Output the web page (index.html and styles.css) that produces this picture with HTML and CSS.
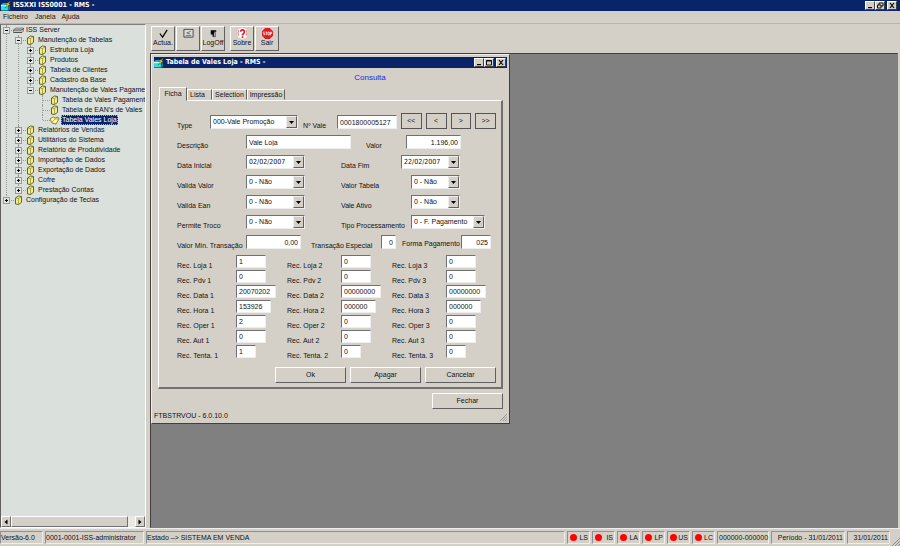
FILE: index.html
```html
<!DOCTYPE html>
<html lang="pt">
<head>
<meta charset="utf-8">
<title>ISSXXI ISS0001 - RMS -</title>
<link rel="stylesheet" href="styles.css">
</head>
<body>
<svg class="defs" aria-hidden="true">
  <symbol id="app" viewBox="0 0 10 10"><path d="M0 3.500l2-1.500h6l-1 2v6H0z" fill="#16b5c5"/><path d="M0 10h7l2-1.500V4.500L7 5.500V9H0" fill="#0b7f91"/><path d="M0 4h6.500v1.500H0z" fill="#d8ffff"/><path d="M0 5.500h6.500V9H0z" fill="#29e1e5"/><path d="M9.500 0L4.500 3.500h2L4 7l5.500-4H7.500z" fill="#ffe928" stroke="#443d00" stroke-width=".4"/></symbol>
  <symbol id="book" viewBox="0 0 8 10"><path d="M1 3l3-2 3 .5v5.800L4 9.500 1 9z" fill="#f5ee83" stroke="#55531c" stroke-width=".9"/><path d="M1 3l3 .5L7 1.500M4 3.500v6" fill="none" stroke="#77732a" stroke-width=".6"/></symbol>
  <symbol id="open" viewBox="0 0 11 10"><path d="M1 4l3-2 2 1 3-1 1 2-3 5-4-1z" fill="#fff79a" stroke="#6d6725" stroke-width=".8"/><path d="M3 7l3-3 4 0" fill="none" stroke="#8d872f" stroke-width=".7"/></symbol>
  <symbol id="server" viewBox="0 0 11 8"><path d="M.5 4l2-2h8v3L9 6.500H.5z" fill="#c4c4c4" stroke="#666" stroke-width=".7"/><path d="M.5 4H9l1.500-2M.5 6.500H9" fill="none" stroke="#444" stroke-width=".8"/></symbol>
  <symbol id="down" viewBox="0 0 5 3"><path d="M0 0h5L2.500 3z"/></symbol>
  <symbol id="min" viewBox="0 0 8 7"><path d="M2 5h4v1.200H2z"/></symbol>
  <symbol id="max" viewBox="0 0 8 7"><path d="M1.500 1.500h5v4.500h-5zM1.500 2h5" fill="none" stroke="#000" stroke-width=".9"/></symbol>
  <symbol id="rest" viewBox="0 0 8 7"><path d="M3 1h4v3H5M3 1v2M1.500 3h3.500v3H1.500z" fill="none" stroke="#000" stroke-width=".9"/></symbol>
  <symbol id="x" viewBox="0 0 8 7"><path d="M2 1l4 5M6 1L2 6" stroke="#000" stroke-width="1.200"/></symbol>
  <symbol id="grip" viewBox="0 0 8 8"><path d="M0 8l8-8M3 8l5-5M6 8l2-2" stroke="#858585" stroke-width=".9"/></symbol>
</svg>
<div class="app">
  <header class="titlebar main-title">
    <svg class="app-icon"><use href="#app"/></svg><h1>ISSXXI ISS0001 - RMS -</h1>
    <div class="winbtns"><button aria-label="Minimizar"><svg><use href="#min"/></svg></button><button aria-label="Restaurar"><svg><use href="#rest"/></svg></button><button class="close" aria-label="Fechar"><svg><use href="#x"/></svg></button></div>
  </header>
  <nav class="menu"><button>Ficheiro</button><button>Janela</button><button>Ajuda</button></nav>
  <div class="body">
    <aside class="side">
      <ul class="tree">
        <li><div class="row"><i class="exp"></i><svg><use href="#server"/></svg><span>ISS Server</span></div>
          <ul>
            <li><div class="row"><i class="exp"></i><svg><use href="#book"/></svg><span>Manutenção de Tabelas</span></div>
              <ul>
                <li><div class="row"><i class="exp plus"></i><svg><use href="#book"/></svg><span>Estrutura Loja</span></div></li>
                <li><div class="row"><i class="exp plus"></i><svg><use href="#book"/></svg><span>Produtos</span></div></li>
                <li><div class="row"><i class="exp plus"></i><svg><use href="#book"/></svg><span>Tabela de Clientes</span></div></li>
                <li><div class="row"><i class="exp plus"></i><svg><use href="#book"/></svg><span>Cadastro da Base</span></div></li>
                <li><div class="row"><i class="exp"></i><svg><use href="#book"/></svg><span>Manutenção de Vales Pagamento</span></div>
                  <ul>
                    <li><div class="row"><i class="leaf"></i><svg><use href="#book"/></svg><span>Tabela de Vales Pagamento</span></div></li>
                    <li><div class="row"><i class="leaf"></i><svg><use href="#book"/></svg><span>Tabela de EAN's de Vales</span></div></li>
                    <li><div class="row"><i class="leaf"></i><svg><use href="#open"/></svg><span class="selected">Tabela Vales Loja</span></div></li>
                  </ul>
                </li>
              </ul>
            </li>
            <li><div class="row"><i class="exp plus"></i><svg><use href="#book"/></svg><span>Relatórios de Vendas</span></div></li>
            <li><div class="row"><i class="exp plus"></i><svg><use href="#book"/></svg><span>Utilitários do Sistema</span></div></li>
            <li><div class="row"><i class="exp plus"></i><svg><use href="#book"/></svg><span>Relatório de Produtividade</span></div></li>
            <li><div class="row"><i class="exp plus"></i><svg><use href="#book"/></svg><span>Importação de Dados</span></div></li>
            <li><div class="row"><i class="exp plus"></i><svg><use href="#book"/></svg><span>Exportação de Dados</span></div></li>
            <li><div class="row"><i class="exp plus"></i><svg><use href="#book"/></svg><span>Cofre</span></div></li>
            <li><div class="row"><i class="exp plus"></i><svg><use href="#book"/></svg><span>Prestação Contas</span></div></li>
          </ul>
        </li>
        <li><div class="row"><i class="exp plus"></i><svg><use href="#book"/></svg><span>Configuração de Teclas</span></div></li>
      </ul>
      <div class="scroll"><button aria-label="Esquerda"><svg viewBox="0 0 8 8"><path d="M5.500 1.500v5L2.500 4z"/></svg></button><i class="thumb"></i><button aria-label="Direita"><svg viewBox="0 0 8 8"><path d="M2.500 1.500v5L5.500 4z"/></svg></button></div>
    </aside>
    <main>
      <div class="toolbar">
        <button><svg viewBox="0 0 12 12"><path d="M2 6l3 4 5-8" fill="none" stroke="#000" stroke-width="1.300"/></svg><span>Actua.</span></button>
        <button aria-label="Ecrã"><svg viewBox="0 0 12 12"><path d="M1 1.500h10v8.500H1z" fill="#ddd" stroke="#333" stroke-width=".9"/><path d="M8.500 3.500L4 5.500l4 1M3 8.200h6" fill="none" stroke="#555" stroke-width=".8"/></svg></button>
        <button><svg viewBox="0 0 12 12"><path d="M3 2.500h6V4H6.500v5.500H5V7H3z"/><path d="M6.500 5H8v4.500H6.500z" fill="#fff" stroke="#222" stroke-width=".7"/></svg><span>LogOff</span></button>
        <i class="space"></i>
        <button><svg viewBox="0 0 12 12"><path d="M2 1l4-1 4 1 2 4-1.500 5L6 12l-4.500-2L0 5z" fill="#fff"/><path d="M4 4q0-2 2-2t2 2-2 3v1M6 9v2" fill="none" stroke="#e91522" stroke-width="1.800"/><path d="M2 2.500L1 5.500l1 3M10 2.500l1 3-1 3" fill="none" stroke="#c44" stroke-width=".8"/></svg><span>Sobre</span></button>
        <button><svg viewBox="0 0 12 12"><path d="M3.500 0h5L12 3.500v5L8.500 12h-5L0 8.500v-5z" fill="#e51820"/><path d="M3 4.500H1.500V6H3v1.500H1.500M3.800 4.500h2M4.800 4.500v3.300M6.500 4.500H8v3H6.500zM9.300 8V4.500h1.200V6H9.300" fill="none" stroke="#fff" stroke-width=".8"/></svg><span>Sair</span></button>
      </div>
      <div class="desktop">
        <section class="window">
          <header class="titlebar">
            <svg class="app-icon"><use href="#app"/></svg><h2>Tabela de Vales Loja - RMS -</h2>
            <div class="winbtns"><button aria-label="Minimizar"><svg><use href="#min"/></svg></button><button aria-label="Maximizar"><svg><use href="#max"/></svg></button><button class="close" aria-label="Fechar"><svg><use href="#x"/></svg></button></div>
          </header>
          <p class="mode">Consulta</p>
          <div class="tabs"><button class="active">Ficha</button><button class="narrow">Lista</button><button class="wide">Selection</button><button class="wide">Impressão</button></div>
          <form class="panel">
            <div class="line type">
              <label for="type">Type</label><div class="combo"><select id="type"><option>000-Vale Promoção</option></select><i><svg><use href="#down"/></svg></i></div>
              <label for="num">Nº Vale</label><input id="num" value="0001800005127">
              <div class="nav"><button type="button">&lt;&lt;</button><button type="button">&lt;</button><button type="button">&gt;</button><button type="button">&gt;&gt;</button></div>
            </div>
            <div class="line desc"><label for="desc">Descrição</label><input id="desc" value="Vale Loja"><label for="valor">Valor</label><input class="num" id="valor" value="1.196,00"></div>
            <div class="line dates"><label for="di">Data Inicial</label><div class="combo date"><select id="di"><option>02/02/2007</option></select><i><svg><use href="#down"/></svg></i></div><label for="df">Data Fim</label><div class="combo date"><select id="df"><option>22/02/2007</option></select><i><svg><use href="#down"/></svg></i></div></div>
            <div class="line flags"><label for="vv">Valida Valor</label><div class="combo"><select id="vv"><option>0 - Não</option></select><i><svg><use href="#down"/></svg></i></div><label for="vt">Valor Tabela</label><div class="combo"><select id="vt"><option>0 - Não</option></select><i><svg><use href="#down"/></svg></i></div></div>
            <div class="line flags"><label for="ve">Valida Ean</label><div class="combo"><select id="ve"><option>0 - Não</option></select><i><svg><use href="#down"/></svg></i></div><label for="va">Vale Ativo</label><div class="combo"><select id="va"><option>0 - Não</option></select><i><svg><use href="#down"/></svg></i></div></div>
            <div class="line flags long"><label for="pt">Permite Troco</label><div class="combo"><select id="pt"><option>0 - Não</option></select><i><svg><use href="#down"/></svg></i></div><label for="tp">Tipo Processamento</label><div class="combo"><select id="tp"><option>0 - F. Pagamento</option></select><i><svg><use href="#down"/></svg></i></div></div>
            <div class="line mins"><label for="vm">Valor Min. Transação</label><input class="num" id="vm" value="0,00"><label for="te">Transação Especial</label><input class="num" id="te" value="0"><label for="fp">Forma Pagamento</label><input class="num" id="fp" value="025"></div>
            <div class="line rec"><label for="l1">Rec. Loja 1</label><input id="l1" value="1"><label for="l2">Rec. Loja 2</label><input id="l2" value="0"><label for="l3">Rec. Loja 3</label><input id="l3" value="0"></div>
            <div class="line rec"><label for="p1">Rec. Pdv 1</label><input id="p1" value="0"><label for="p2">Rec. Pdv 2</label><input id="p2" value="0"><label for="p3">Rec. Pdv 3</label><input id="p3" value="0"></div>
            <div class="line rec w40"><label for="d1">Rec. Data 1</label><input id="d1" value="20070202"><label for="d2">Rec. Data 2</label><input id="d2" value="00000000"><label for="d3">Rec. Data 3</label><input id="d3" value="00000000"></div>
            <div class="line rec w35"><label for="h1">Rec. Hora 1</label><input id="h1" value="153926"><label for="h2">Rec. Hora 2</label><input id="h2" value="000000"><label for="h3">Rec. Hora 3</label><input id="h3" value="000000"></div>
            <div class="line rec"><label for="o1">Rec. Oper 1</label><input id="o1" value="2"><label for="o2">Rec. Oper 2</label><input id="o2" value="0"><label for="o3">Rec. Oper 3</label><input id="o3" value="0"></div>
            <div class="line rec"><label for="a1">Rec. Aut 1</label><input id="a1" value="0"><label for="a2">Rec. Aut 2</label><input id="a2" value="0"><label for="a3">Rec. Aut 3</label><input id="a3" value="0"></div>
            <div class="line rec w20"><label for="t1">Rec. Tenta. 1</label><input id="t1" value="1"><label for="t2">Rec. Tenta. 2</label><input id="t2" value="0"><label for="t3">Rec. Tenta. 3</label><input id="t3" value="0"></div>
            <div class="actions"><button type="button">Ok</button><button type="button">Apagar</button><button type="button">Cancelar</button></div>
          </form>
          <div class="actions foot"><button>Fechar</button></div>
          <footer><span>FTBSTRVOU - 6.0.10.0</span><svg><use href="#grip"/></svg></footer>
        </section>
      </div>
    </main>
  </div>
  <footer class="status">
    <span class="ver">Versão-6.0</span><span class="user">0001-0001-ISS-administrator</span><span class="state">Estado –&gt; SISTEMA EM VENDA</span>
    <span class="led">LS</span><span class="led">IS</span><span class="led">LA</span><span class="led">LP</span><span class="led">US</span><span class="led">LC</span>
    <span class="code">000000-000000</span><span class="period">Período - 31/01/2011</span><span class="today">31/01/2011</span><svg><use href="#grip"/></svg>
  </footer>
</div>
</body>
</html>
```
FILE: styles.css
```css
* { box-sizing: border-box; }
body { margin: 0; background: #d4d0c8; color: #111; font: 7px/10px "Liberation Sans", Arial, sans-serif; }
button, input, select { margin: 0; padding: 0; border: 0; border-radius: 0; background: #d4d0c8; color: inherit; font: inherit; }
h1, h2, p, ul { margin: 0; padding: 0; }
svg { display: block; flex: none; }
.defs { position: absolute; width: 0; height: 0; }
.app { display: flex; flex-direction: column; height: 100vh; }

.titlebar { display: flex; align-items: center; gap: 2px; height: 11px; background: #0a246a; color: #fff; }
.titlebar h1, .titlebar h2 { flex: 1; font: bold 7px/11px "DejaVu Sans Condensed", "DejaVu Sans", sans-serif; white-space: nowrap; }
.app-icon { width: 10px; height: 10px; }
.main-title { padding: 0 2px 0 1px; }
.winbtns { display: flex; padding-right: 1px; }
.winbtns button { width: 10px; height: 9px; border: 1px solid; border-color: #fff #404040 #404040 #fff; }
.winbtns svg { width: 8px; height: 7px; }
.winbtns .close { margin-left: 2px; }
.menu { display: flex; gap: 7px; height: 13px; padding-left: 3px; border-bottom: 1px solid #b5b5b5; }
.menu button:last-child { margin-left: -1px; }

.body { flex: 1; display: flex; gap: 4px; min-height: 0; }
.side { flex: none; display: flex; flex-direction: column; width: 146px; border: 1px solid; border-color: #808080 #fff #fff #606060; background: #dae0dc; overflow: hidden; }
.tree { flex: 1; padding-left: 2px; overflow: hidden; list-style: none; }
.tree ul { padding-left: 12px; list-style: none; }
.tree li { position: relative; }
.tree li::before { content: ""; position: absolute; left: 3px; top: 0; bottom: 0; border-left: 1px dotted #999; }
.tree li:last-child::before { bottom: auto; height: 5px; }
.row { position: relative; display: flex; align-items: center; height: 10px; white-space: nowrap; }
.row::before { content: ""; position: absolute; left: 4px; top: 5px; width: 7px; border-top: 1px dotted #999; }
.row svg { position: relative; width: 11px; height: 10px; margin: 0 1px 0 3px; }
.row span { padding: 0 1px; }
.row .selected { background: #0a246a; color: #fff; outline: 1px dotted #c5b36a; outline-offset: -1px; }
.exp, .leaf { flex: none; width: 7px; height: 7px; }
.exp { position: relative; border: 1px solid #999; background: #e4e8e5; }
.exp::before { content: ""; position: absolute; left: 1px; top: 2px; width: 3px; height: 1px; background: #000; }
.plus::after { content: ""; position: absolute; left: 2px; top: 1px; width: 1px; height: 3px; background: #000; }
.scroll { display: flex; justify-content: space-between; height: 11px; background: #ebe9e4; }
.scroll button, .thumb { width: 10px; border: 1px solid; border-color: #fff #707070 #707070 #fff; background: #d4d0c8; }
.scroll svg { width: 8px; height: 8px; }
.thumb { flex: 1; margin-right: 7px; }

main { flex: 1; display: flex; flex-direction: column; min-width: 0; }
.toolbar { display: flex; gap: 1px; height: 29px; padding: 2px 0 1px 1px; }
.toolbar button { display: flex; flex-direction: column; align-items: center; width: 24px; height: 25px; padding-top: 1px; border: 1px solid; border-color: #fff #606060 #606060 #fff; }
.toolbar button svg { width: 11px; height: 11px; }
.toolbar button span { margin-top: -1px; }
.toolbar .space { width: 3px; }
.desktop { flex: 1; position: relative; margin-right: 2px; border: 1px solid; border-color: #404040 #808080 #808080 #404040; background: #808080; }

.window { position: absolute; left: 0; top: 0; width: 359px; padding: 2px; border: 1px solid; border-color: #eee #404040 #404040 #eee; background: #d4d0c8; }
.mode { padding: 5px 0 4px 79px; color: #2424f0; font-size: 8px; line-height: 10px; text-align: center; }
.tabs { display: flex; align-items: flex-end; height: 13px; padding-left: 5px; }
.tabs button { position: relative; width: 25px; height: 11px; border: 1px solid; border-color: #fff #606060 transparent #fff; }
.tabs .active { z-index: 1; width: 28px; height: 14px; margin-bottom: -1px; }
.tabs .narrow { padding-left: 2px; text-align: left; }
.tabs .wide { width: 35px; }
.tabs .wide:last-child { width: 38px; }
.panel { margin: 0 4px; padding: 12px 5px 4px 18px; border: solid; border-width: 1px 2px 2px 1px; border-color: #fff #707070 #707070 #fff; }
.line { display: grid; align-items: start; height: 20px; }
.line label { padding-top: 6px; white-space: nowrap; }
.panel input, .combo { width: 100%; height: 14px; border: 1px solid; border-color: #707070 #eee #eee #707070; background: #fff; }
.panel input { padding: 0 2px; }
.panel .num { text-align: right; }
.combo { display: flex; }
.combo select { flex: 1; min-width: 0; padding-left: 2px; background: #fff; appearance: none; }
.combo i { display: grid; place-items: center; width: 11px; border: 1px solid; border-color: #eee #606060 #606060 #eee; background: #d4d0c8; }
.combo svg { width: 5px; height: 3px; }
.date { font-family: "DejaVu Sans Condensed", sans-serif; }
.type { grid-template-columns: 33px 88px 39px 60px 1fr; height: 22px; padding-top: 2px; }
.type label:nth-of-type(2) { padding-left: 5px; }
.nav { display: flex; gap: 4px; padding-left: 4px; }
.nav button { flex: 1; height: 16px; margin-top: -2px; border: 1px solid #555; }
.desc { grid-template-columns: 69px 105px 55px 55px; }
.desc label:nth-of-type(2) { padding-left: 15px; }
.dates { grid-template-columns: 69px 59px 96px 59px; }
.flags { grid-template-columns: 69px 59px 106px 49px; }
.long { grid-template-columns: 69px 59px 106px 74px; }
.dates label:nth-of-type(2), .flags label:nth-of-type(2) { padding-left: 36px; }
.mins { grid-template-columns: 69px 55px 80px 15px 65px 30px; }
.mins label:nth-of-type(n+2) { padding-left: 10px; }
.mins label:nth-of-type(3) { padding-top: 4px; padding-left: 6px; }
.rec { grid-template-columns: 59px 51px 54px 51px 54px 1fr; height: 15px; }
.panel .rec input { width: 30px; height: 13px; }
.panel .w40 input { width: 40px; }
.panel .w35 input { width: 35px; }
.panel .w20 input { width: 20px; }
.actions { display: flex; justify-content: flex-end; gap: 4px; padding-top: 7px; }
.actions button { width: 71px; height: 16px; border: 1px solid; border-color: #fff #606060 #606060 #fff; }
.foot { padding: 4px 4px 0 0; }
.window footer { display: flex; align-items: flex-end; justify-content: space-between; height: 12px; }
.window footer svg { width: 7px; height: 7px; }

.status { display: flex; align-items: center; gap: 2px; height: 18px; border-top: 1px solid #eee; white-space: nowrap; }
.status > span { height: 13px; padding: 0 1px; border: 1px solid; border-color: #909090 #eee #eee #909090; line-height: 11px; }
.status .ver { width: 43px; padding: 0; }
.status .user { width: 99px; padding: 0; }
.status .state { flex: 1; padding: 0; }
.status .led { display: flex; align-items: center; justify-content: space-between; width: 23px; }
.led::before { content: ""; width: 7px; height: 7px; margin-left: 1px; border-radius: 50%; background: #f00; }
.status .code { width: 52px; }
.status .period, .status .today { width: 74px; text-align: right; }
.status .today { width: 43px; }
.status svg { align-self: flex-end; width: 8px; height: 8px; }
```
